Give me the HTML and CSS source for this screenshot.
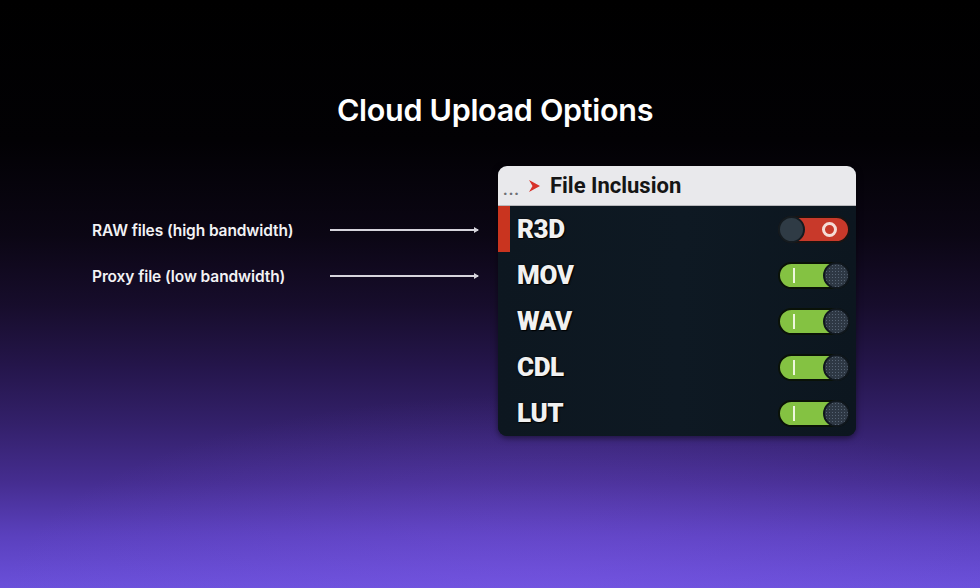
FILE: index.html
```html
<!DOCTYPE html>
<html lang="en">
<head>
<meta charset="utf-8">
<title>Cloud Upload Options</title>
<link rel="stylesheet" href="styles.css">
</head>
<body>
<main class="stage">
  <h1 class="title">Cloud Upload Options</h1>
  <div class="content">
    <div class="notes">
      <div class="note">
        <span class="note-text">RAW files (high bandwidth)</span>
        <span class="arrow"></span>
      </div>
      <div class="note">
        <span class="note-text">Proxy file (low bandwidth)</span>
        <span class="arrow"></span>
      </div>
    </div>
    <section class="panel">
      <header class="panel-head">
        <span class="dots">...</span>
        <svg class="chev" width="11" height="12" viewBox="0 0 11 12"><path d="M0 0 L11 6 L0 12 L3.5 6 Z" fill="#d8322a"/></svg>
        <span class="head-title">File Inclusion</span>
      </header>
      <div class="row row-active">
        <span class="row-label">R3D</span>
        <span class="toggle off"><span class="knob"></span><span class="ring"></span></span>
      </div>
      <div class="row">
        <span class="row-label">MOV</span>
        <span class="toggle on"><span class="tick"></span><span class="knob"></span></span>
      </div>
      <div class="row">
        <span class="row-label">WAV</span>
        <span class="toggle on"><span class="tick"></span><span class="knob"></span></span>
      </div>
      <div class="row">
        <span class="row-label">CDL</span>
        <span class="toggle on"><span class="tick"></span><span class="knob"></span></span>
      </div>
      <div class="row">
        <span class="row-label">LUT</span>
        <span class="toggle on"><span class="tick"></span><span class="knob"></span></span>
      </div>
    </section>
  </div>
</main>
</body>
</html>
```

FILE: styles.css
```css
html, body {
  margin: 0;
  padding: 0;
}

body {
  width: 980px;
  height: 588px;
  overflow: hidden;
  font-family: Inter, "Liberation Sans", sans-serif;
  color: #fff;
}

.stage {
  box-sizing: border-box;
  width: 980px;
  height: 588px;
  padding-top: 91px;
  background:
    radial-gradient(ellipse 55% 35% at 55% 102%, rgba(130, 90, 235, 0.35), rgba(130, 90, 235, 0) 100%),
    linear-gradient(180deg, #000000 0%, #020104 24%, #0b0614 40%, #170d2c 52%, #24154a 62%, #33206a 72%, #452d90 82%, #5a40bd 91%, #6a50da 100%);
}

.title {
  margin: 0;
  padding-left: 10px;
  text-align: center;
  font-size: 30.5px;
  line-height: 38px;
  font-weight: 600;
  letter-spacing: -0.3px;
  color: #ffffff;
}

.content {
  display: flex;
  margin-top: 37px;
  padding-left: 92px;
}

.notes {
  display: flex;
  flex-direction: column;
  padding-top: 40px;
  width: 406px;
}

.note {
  display: flex;
  align-items: center;
  height: 46px;
}

.note:first-child {
  margin-top: 1px;
}

.note-text {
  width: 238px;
  font-size: 15.5px;
  font-weight: 600;
  color: #f2f2f4;
  letter-spacing: -0.1px;
}

.arrow {
  position: relative;
  width: 148px;
  height: 1.5px;
  background: #d6d4dc;
}

.arrow::after {
  content: "";
  position: absolute;
  right: -1px;
  top: -2.5px;
  border-left: 5px solid #d6d4dc;
  border-top: 3.25px solid transparent;
  border-bottom: 3.25px solid transparent;
}

.panel {
  width: 358px;
  border-radius: 9px;
  overflow: hidden;
  background: #0d1720;
  box-shadow: 0 2px 6px rgba(0, 0, 0, 0.5);
  font-family: Roboto, "Liberation Sans", sans-serif;
}

.panel-head {
  display: flex;
  align-items: center;
  height: 40px;
  box-sizing: border-box;
  padding-left: 5px;
  background: #e9e9ec;
  border-bottom: 1px solid #b8b8bc;
}

.dots {
  font-size: 16px;
  font-weight: 700;
  color: #6c6f74;
  letter-spacing: 1px;
  margin-top: 7px;
}

.chev {
  margin-left: 9px;
  margin-right: 10px;
}

.head-title {
  font-size: 22px;
  font-weight: 700;
  color: #151515;
  letter-spacing: 0;
}

.row {
  display: flex;
  align-items: center;
  justify-content: space-between;
  height: 46px;
  box-sizing: border-box;
  padding-left: 19px;
  padding-right: 6px;
  background: linear-gradient(90deg, #0d1720, #0e1923 50%, #0c161f);
}

.row-active {
  border-left: 12px solid #c9341f;
  padding-left: 7px;
}

.row-label {
  font-size: 26px;
  font-weight: 900;
  color: #f1f1f1;
  letter-spacing: -0.4px;
  text-shadow: 0 0 2px #000, 1px 1px 1px #000;
}

.toggle {
  position: relative;
  display: block;
  width: 72px;
  height: 27px;
  border-radius: 14px;
  box-sizing: border-box;
  border: 2px solid #0a1208;
}

.toggle.on {
  background: #84c242;
}

.toggle.off {
  background: #c8392a;
  border-color: #1b1412;
}

.knob {
  position: absolute;
  top: -2px;
  width: 27px;
  height: 27px;
  border-radius: 50%;
  box-sizing: border-box;
  border: 2px solid #10171e;
  background-color: #2e3844;
  background-image: radial-gradient(circle, rgba(90, 104, 120, 0.9) 0.7px, transparent 1px);
  background-size: 3px 3px;
}

.toggle.on .knob {
  right: -2px;
}

.toggle.off .knob {
  left: -2px;
  background-image: none;
  background-color: #2f3b45;
  border-color: #141b20;
}

.tick {
  position: absolute;
  left: 13px;
  top: 4px;
  width: 2px;
  height: 15px;
  background: #eef7dc;
}

.ring {
  position: absolute;
  right: 11px;
  top: 4px;
  width: 15px;
  height: 15px;
  box-sizing: border-box;
  border-radius: 50%;
  border: 3px solid #f4dcd6;
}
```
